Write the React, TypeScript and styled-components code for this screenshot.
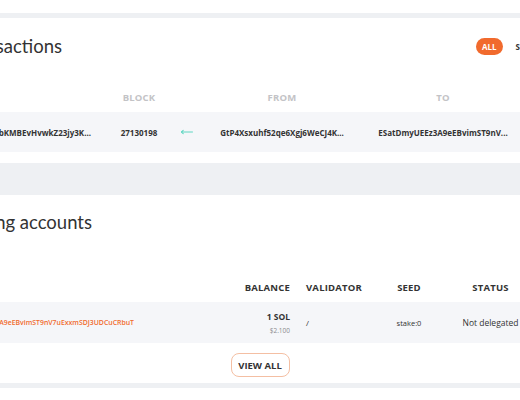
import React from 'react';
import styled, { createGlobalStyle } from 'styled-components';

const GlobalStyle = createGlobalStyle`
  html, body {
    margin: 0;
    padding: 0;
    background: #ffffff;
    font-family: "Open Sans", "Liberation Sans", sans-serif;
    color: #333333;
  }
  #root {
    width: 520px;
    height: 400px;
    overflow: hidden;
  }
`;

const Page = styled.div`
  width: 520px;
  height: 400px;
  overflow: hidden;
  background: #eef0f3;
  display: flex;
  flex-direction: column;
`;

const Card = styled.section<{ $gapAfter: number }>`
  background: #ffffff;
  margin-bottom: ${(p) => p.$gapAfter}px;
  flex-shrink: 0;
`;

const Stub = styled.div<{ $height?: number }>`
  background: #ffffff;
  flex: ${(p) => (p.$height ? `0 0 ${p.$height}px` : '1 1 auto')};
`;

const Gap = styled.div<{ $height: number }>`
  height: ${(p) => p.$height}px;
  flex: 0 0 ${(p) => p.$height}px;
`;

const TitleBar = styled.div<{ $height: number }>`
  height: ${(p) => p.$height}px;
  display: flex;
  align-items: center;
  justify-content: space-between;
`;

/* the page is scrolled sideways: text starting left of the view is clipped */
const ClipLeft = styled.div<{ $width: number }>`
  width: ${(p) => p.$width}px;
  display: flex;
  justify-content: flex-end;
  overflow: hidden;
  white-space: nowrap;
`;

const Title = styled.h2`
  margin: 0;
  font-family: Lato, "Open Sans", sans-serif;
  font-size: 18.5px;
  font-weight: 400;
  color: #333333;
`;

const Filters = styled.div`
  display: flex;
  align-items: center;
  gap: 13px;
  margin-right: -40px;
  width: 84px;
  flex-shrink: 0;
`;

const Pill = styled.span<{ $active?: boolean }>`
  display: inline-flex;
  align-items: center;
  justify-content: center;
  height: 17px;
  padding: ${(p) => (p.$active ? '0 6px' : '0')};
  border-radius: 9px;
  background: ${(p) => (p.$active ? '#f16a2d' : 'transparent')};
  color: ${(p) => (p.$active ? '#ffffff' : '#333333')};
  font-size: 8px;
  font-weight: 700;
`;

const TxGrid = styled.div<{ $height: number; $shaded?: boolean; $top?: number }>`
  display: grid;
  grid-template-columns: 104px 70px 24px 168px 154px;
  align-items: center;
  height: ${(p) => p.$height}px;
  margin-top: ${(p) => p.$top ?? 0}px;
  background: ${(p) => (p.$shaded ? '#f5f6f9' : 'transparent')};
`;

const StakeGrid = styled.div<{ $height: number; $shaded?: boolean; $top?: number }>`
  display: grid;
  grid-template-columns: 200px 96px 76px 74px 89px;
  align-items: center;
  width: 535px;
  height: ${(p) => p.$height}px;
  margin-top: ${(p) => p.$top ?? 0}px;
  background: ${(p) => (p.$shaded ? '#f5f6f9' : 'transparent')};
`;

const Head = styled.div<{ $align?: 'left' | 'center' | 'right'; $muted?: boolean; $pad?: number }>`
  font-size: 9.5px;
  font-weight: 700;
  text-transform: uppercase;
  letter-spacing: 0.2px;
  white-space: nowrap;
  color: ${(p) => (p.$muted ? '#c3c3c6' : '#333333')};
  text-align: ${(p) => p.$align ?? 'center'};
  padding: 0 ${(p) => p.$pad ?? 0}px;
`;

const Cell = styled.div<{ $align?: 'left' | 'center' | 'right'; $pad?: number; $size?: number; $weight?: number }>`
  font-size: ${(p) => p.$size ?? 8}px;
  font-weight: ${(p) => p.$weight ?? 700};
  color: #333333;
  white-space: nowrap;
  text-align: ${(p) => p.$align ?? 'center'};
  padding: 0 ${(p) => p.$pad ?? 0}px;
  display: flex;
  flex-direction: column;
  align-items: ${(p) => (p.$align === 'right' ? 'flex-end' : p.$align === 'left' ? 'flex-start' : 'center')};
`;

const HashEnd = styled.div`
  display: flex;
  justify-content: flex-end;
  padding-right: 13px;
  overflow: hidden;
`;

const Address = styled.span`
  font-size: 6.9px;
  font-weight: 600;
  color: #f16a2d;
  white-space: nowrap;
`;

const Fiat = styled.span`
  margin-top: 4px;
  font-size: 6.5px;
  font-weight: 400;
  color: #8a8a8e;
`;

const Footer = styled.div`
  display: flex;
  justify-content: center;
  padding: 10px 0 6px;
`;

const ViewAll = styled.button`
  width: 59px;
  height: 24px;
  padding: 0;
  border: 1px solid #f4bfa3;
  border-radius: 8px;
  background: #ffffff;
  font-family: inherit;
  font-size: 9.5px;
  font-weight: 700;
  color: #333333;
  cursor: pointer;
`;

const DirectionArrow = () => (
  <svg width="13" height="6" viewBox="0 0 13 6" fill="none">
    <path d="M12.5 3H1.5" stroke="#5fd6c2" strokeWidth="1" strokeLinecap="round" />
    <path d="M3.2 1.4L1.5 3l1.7 1.6" stroke="#5fd6c2" strokeWidth="1.1" strokeLinecap="round" strokeLinejoin="round" />
  </svg>
);

const transactions = [
  {
    hash: '5xqP2bKMBEvHvwkZ23jy3K...',
    block: '27130198',
    from: 'GtP4Xsxuhf52qe6Xgj6WeCJ4K...',
    to: 'ESatDmyUEEz3A9eEBvimST9nV...',
  },
];

const stakes = [
  {
    address: 'ESatDmyUEEz3A9eEBvimST9nV7uExxmSDJ3UDCuCRbuT',
    balance: '1 SOL',
    fiat: '$2.100',
    validator: '/',
    seed: 'stake:0',
    status: 'Not delegated',
  },
];

export default function App() {
  return (
    <>
      <GlobalStyle />
      <Page>
        <Stub $height={13} />
        <Gap $height={5} />
        <Card $gapAfter={32}>
          <TitleBar $height={56}>
            <ClipLeft $width={62}>
              <Title>Transactions</Title>
            </ClipLeft>
            <Filters>
              <Pill $active>ALL</Pill>
              <Pill>SOL</Pill>
            </Filters>
          </TitleBar>
          <TxGrid $height={20} $top={13}>
            <div />
            <Head $muted>Block</Head>
            <div />
            <Head $muted>From</Head>
            <Head $muted>To</Head>
          </TxGrid>
          {transactions.map((tx) => (
            <TxGrid key={tx.hash} $height={40} $shaded $top={5}>
              <HashEnd>
                <Cell>{tx.hash}</Cell>
              </HashEnd>
              <Cell>{tx.block}</Cell>
              <Cell>
                <DirectionArrow />
              </Cell>
              <Cell>{tx.from}</Cell>
              <Cell>{tx.to}</Cell>
            </TxGrid>
          ))}
          <Gap $height={11} />
        </Card>
        <Card $gapAfter={5}>
          <TitleBar $height={54}>
            <ClipLeft $width={92}>
              <Title>Staking accounts</Title>
            </ClipLeft>
          </TitleBar>
          <StakeGrid $height={20} $top={28}>
            <div />
            <Head $align="right" $pad={6}>Balance</Head>
            <Head $align="left" $pad={10}>Validator</Head>
            <Head>Seed</Head>
            <Head>Status</Head>
          </StakeGrid>
          {stakes.map((s) => (
            <StakeGrid key={s.address} $height={41} $shaded $top={5}>
              <ClipLeft $width={134}>
                <Address>{s.address}</Address>
              </ClipLeft>
              <Cell $align="right" $pad={6} $size={8.5}>
                {s.balance}
                <Fiat>{s.fiat}</Fiat>
              </Cell>
              <Cell $align="left" $pad={10} $weight={400}>
                {s.validator}
              </Cell>
              <Cell $size={7.5} $weight={400}>
                {s.seed}
              </Cell>
              <Cell $size={8.5} $weight={500}>
                {s.status}
              </Cell>
            </StakeGrid>
          ))}
          <Footer>
            <ViewAll>VIEW ALL</ViewAll>
          </Footer>
        </Card>
        <Stub />
      </Page>
    </>
  );
}
